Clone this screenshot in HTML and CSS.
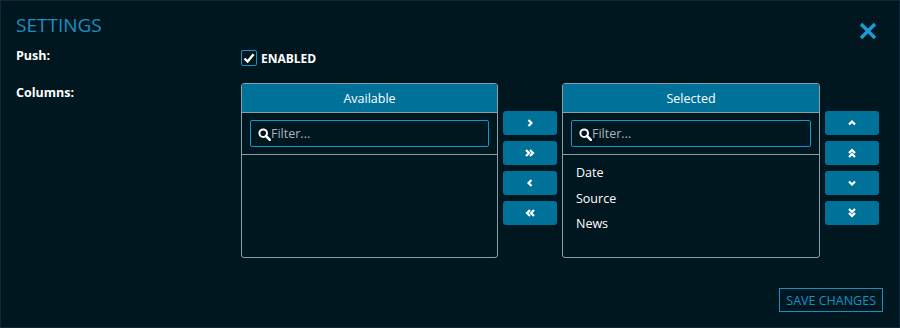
FILE: index.html
```html
<!DOCTYPE html>
<html lang="en">
<head>
    <meta charset="UTF-8">
    <title>Settings</title>
    <link rel="stylesheet" href="styles.css">
</head>
<body>
    <div class="settings">
        <div class="settings-header">
            <h2>SETTINGS</h2>
            <button class="close" aria-label="Close">
                <svg width="18" height="18" viewBox="0 0 18 18"><path d="M2 2L16 16M16 2L2 16" stroke="#1a9ad6" stroke-width="3.4" stroke-linecap="butt"/></svg>
            </button>
        </div>

        <div class="row row-push">
            <label class="row-label">Push:</label>
            <label class="check">
                <span class="check-box">
                    <svg width="12" height="12" viewBox="0 0 12 12"><path d="M1.5 6.5L4.6 9.5L10.6 2.2" fill="none" stroke="#fff" stroke-width="2.4"/></svg>
                </span>
                ENABLED
            </label>
        </div>

        <div class="row">
            <label class="row-label">Columns:</label>
            <div class="picker">
                <div class="list-box">
                    <div class="list-head">Available</div>
                    <div class="list-filter">
                        <div class="filter-input">
                            <svg class="search" width="13" height="13" viewBox="0 0 13 13"><circle cx="5.2" cy="5.2" r="3.8" fill="none" stroke="#fff" stroke-width="2"/><path d="M8 8L11.8 11.8" stroke="#fff" stroke-width="2.6" stroke-linecap="round"/></svg>
                            <span>Filter...</span>
                        </div>
                    </div>
                    <ul class="list-items"></ul>
                </div>

                <div class="btn-col">
                    <button class="arrow-btn"><svg width="6" height="8" viewBox="0 0 6 8"><path d="M1.5 1L4.5 4L1.5 7" fill="none" stroke="#fff" stroke-width="2.2"/></svg></button>
                    <button class="arrow-btn"><svg width="10" height="8" viewBox="0 0 10 8"><path d="M1 1L4 4L1 7M5 1L8 4L5 7" fill="none" stroke="#fff" stroke-width="2.2"/></svg></button>
                    <button class="arrow-btn"><svg width="6" height="8" viewBox="0 0 6 8"><path d="M4.5 1L1.5 4L4.5 7" fill="none" stroke="#fff" stroke-width="2.2"/></svg></button>
                    <button class="arrow-btn"><svg width="10" height="8" viewBox="0 0 10 8"><path d="M5 1L2 4L5 7M9 1L6 4L9 7" fill="none" stroke="#fff" stroke-width="2.2"/></svg></button>
                </div>

                <div class="list-box list-box-wide">
                    <div class="list-head">Selected</div>
                    <div class="list-filter">
                        <div class="filter-input">
                            <svg class="search" width="13" height="13" viewBox="0 0 13 13"><circle cx="5.2" cy="5.2" r="3.8" fill="none" stroke="#fff" stroke-width="2"/><path d="M8 8L11.8 11.8" stroke="#fff" stroke-width="2.6" stroke-linecap="round"/></svg>
                            <span>Filter...</span>
                        </div>
                    </div>
                    <ul class="list-items">
                        <li>Date</li>
                        <li>Source</li>
                        <li>News</li>
                    </ul>
                </div>

                <div class="btn-col">
                    <button class="arrow-btn"><svg width="8" height="6" viewBox="0 0 8 6"><path d="M1 4.5L4 1.5L7 4.5" fill="none" stroke="#fff" stroke-width="2.2"/></svg></button>
                    <button class="arrow-btn"><svg width="8" height="10" viewBox="0 0 8 10"><path d="M1 5L4 2L7 5M1 9L4 6L7 9" fill="none" stroke="#fff" stroke-width="2.2"/></svg></button>
                    <button class="arrow-btn"><svg width="8" height="6" viewBox="0 0 8 6"><path d="M1 1.5L4 4.5L7 1.5" fill="none" stroke="#fff" stroke-width="2.2"/></svg></button>
                    <button class="arrow-btn"><svg width="8" height="10" viewBox="0 0 8 10"><path d="M1 1L4 4L7 1M1 5L4 8L7 5" fill="none" stroke="#fff" stroke-width="2.2"/></svg></button>
                </div>
            </div>
        </div>

        <div class="footer">
            <button class="save">SAVE CHANGES</button>
        </div>
    </div>
</body>
</html>
```

FILE: styles.css
```css
:root {
    --bg-color: #011720;
    --frame-color: #0e2a37;
    --accent-color: #1a8fc4;
    --head-color: #00729a;
    --line-color: #8a9ea6;
    --text-color: #ffffff;
}

* {
    box-sizing: border-box;
}

body {
    margin: 0;
    background-color: var(--bg-color);
    font-family: 'Open Sans', 'Noto Sans', sans-serif;
    color: var(--text-color);
}

.settings {
    width: 900px;
    height: 328px;
    border: 1px solid var(--frame-color);
    padding: 0 15px;
}

.settings-header {
    display: flex;
    justify-content: space-between;
    align-items: center;
    height: 44px;
    padding-top: 4px;
}

.settings-header h2 {
    margin: 0;
    font-size: 19px;
    font-weight: 400;
    color: var(--accent-color);
}

.close {
    background: none;
    border: 0;
    padding: 0;
    margin-right: 7px;
    margin-top: 12px;
    display: flex;
}

.row {
    display: flex;
}

.row-label {
    flex: 0 0 225px;
    font-size: 12.5px;
    font-weight: 700;
    padding-top: 1px;
}

.row-push {
    height: 37px;
    margin-top: 1px;
}

.check {
    display: flex;
    align-items: center;
    gap: 4px;
    font-size: 12px;
    font-weight: 700;
    height: 20px;
    margin-top: 2px;
}

.check-box {
    width: 16px;
    height: 16px;
    border: 1px solid var(--accent-color);
    border-radius: 2px;
    display: flex;
    align-items: center;
    justify-content: center;
}

.picker {
    display: flex;
    align-items: flex-start;
    flex-shrink: 0;
}

.list-box {
    flex: 0 0 257px;
    height: 175px;
    border: 1px solid var(--line-color);
    border-radius: 3px;
    overflow: hidden;
}

.list-box-wide {
    flex-basis: 258px;
}

.list-head {
    background-color: var(--head-color);
    height: 29px;
    line-height: 29px;
    text-align: center;
    font-size: 12.5px;
    border-bottom: 1px solid var(--line-color);
}

.list-filter {
    padding: 7px 8px;
    border-bottom: 1px solid var(--line-color);
}

.filter-input {
    height: 27px;
    border: 1px solid #0a9ad2;
    border-radius: 2px;
    display: flex;
    align-items: center;
    padding-left: 7px;
    font-size: 12.5px;
    color: #a8b4ba;
}

.search {
    margin-top: 1px;
}

.list-items {
    list-style: none;
    margin: 0;
    padding: 9px 0 0 13px;
    font-size: 12.5px;
}

.list-items li {
    height: 25.5px;
    line-height: 18px;
}

.btn-col {
    display: flex;
    flex-direction: column;
    flex-shrink: 0;
    gap: 6px;
    margin: 28px 5px 0 5px;
}

.arrow-btn {
    width: 54px;
    height: 24px;
    background-color: var(--head-color);
    border: 0;
    border-radius: 3px;
    padding: 0;
    display: flex;
    align-items: center;
    justify-content: center;
}

.footer {
    display: flex;
    justify-content: flex-end;
    margin-top: 30px;
    padding-right: 1px;
}

.save {
    background: none;
    border: 1px solid var(--accent-color);
    color: var(--accent-color);
    font-family: 'Open Sans', 'Noto Sans', sans-serif;
    font-size: 12.5px;
    height: 24px;
    padding: 0 6px;
}
```
